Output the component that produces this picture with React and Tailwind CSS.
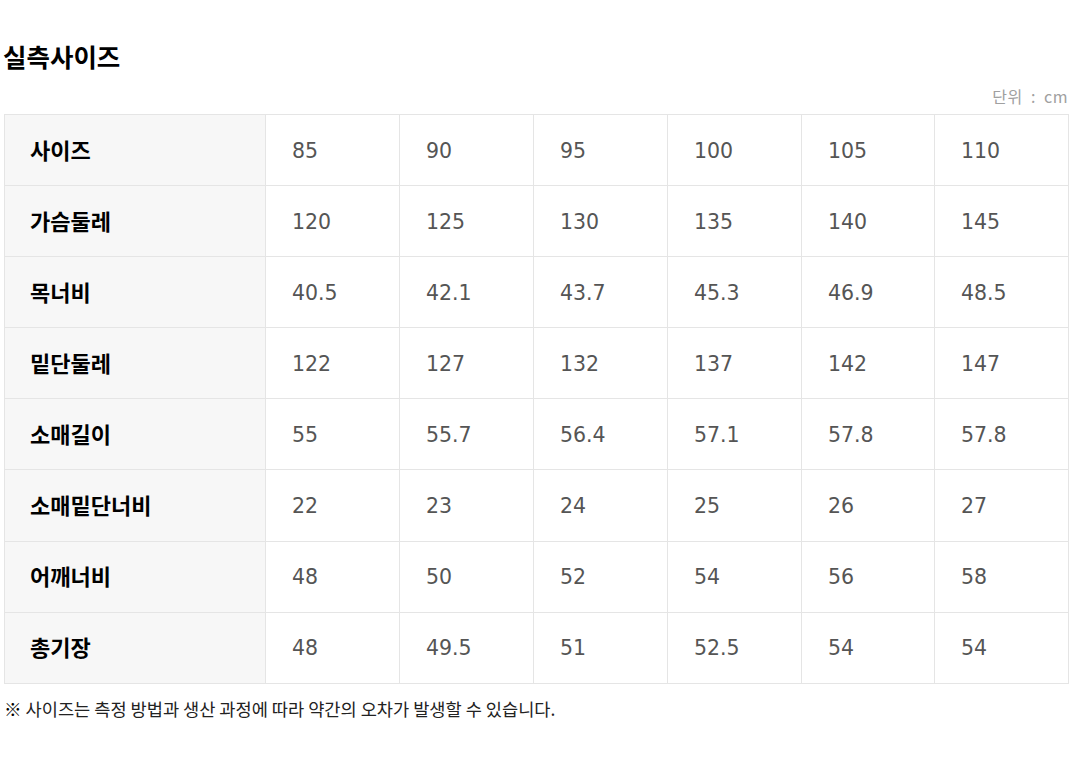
export default function App() {
  const kr = { fontFamily: '"Noto Sans CJK KR", "Noto Sans", sans-serif' };
  const num = { fontFamily: '"DejaVu Sans", "Noto Sans CJK KR", sans-serif' };
  const rows = [
    ["사이즈", "85", "90", "95", "100", "105", "110"],
    ["가슴둘레", "120", "125", "130", "135", "140", "145"],
    ["목너비", "40.5", "42.1", "43.7", "45.3", "46.9", "48.5"],
    ["밑단둘레", "122", "127", "132", "137", "142", "147"],
    ["소매길이", "55", "55.7", "56.4", "57.1", "57.8", "57.8"],
    ["소매밑단너비", "22", "23", "24", "25", "26", "27"],
    ["어깨너비", "48", "50", "52", "54", "56", "58"],
    ["총기장", "48", "49.5", "51", "52.5", "54", "54"],
  ];
  return (
    <div className="w-[1072px] h-[762px] bg-white px-[4px]" style={kr}>
      <div className="pt-[38px] h-[80px] text-[25.5px] font-bold leading-[36px] text-black -ml-[1px]">실측사이즈</div>
      <div className="h-[34px] text-right text-[16px] leading-[32px] text-[#a0a0a0] tracking-[0.5px]">단위&nbsp;&nbsp;:&nbsp;&nbsp;cm</div>
      <table className="w-[1064px] border-collapse table-fixed">
        <colgroup>
          <col className="w-[261px]" />
          <col className="w-[134px]" />
          <col className="w-[134px]" />
          <col className="w-[134px]" />
          <col className="w-[134px]" />
          <col className="w-[133px]" />
          <col className="w-[134px]" />
        </colgroup>
        <tbody>
          {rows.map((r, i) => (
            <tr key={i} className="h-[71.1px]">
              {r.map((c, j) =>
                j === 0 ? (
                  <td key={j} className="border border-[#e5e5e5] bg-[#f7f7f7] pl-[25px] pb-[3px] text-[22px] font-bold text-black leading-none">
                    {c}
                  </td>
                ) : (
                  <td key={j} className="border border-[#e5e5e5] pl-[26px] pt-[2px] text-[20.5px] text-[#555555] leading-none" style={num}>
                    {c}
                  </td>
                )
              )}
            </tr>
          ))}
        </tbody>
      </table>
      <div className="pt-[13px] text-[17.6px] leading-[24px] text-[#222]"><span className="font-bold text-black">※</span> 사이즈는 측정 방법과 생산 과정에 따라 약간의 오차가 발생할 수 있습니다.</div>
    </div>
  );
}
